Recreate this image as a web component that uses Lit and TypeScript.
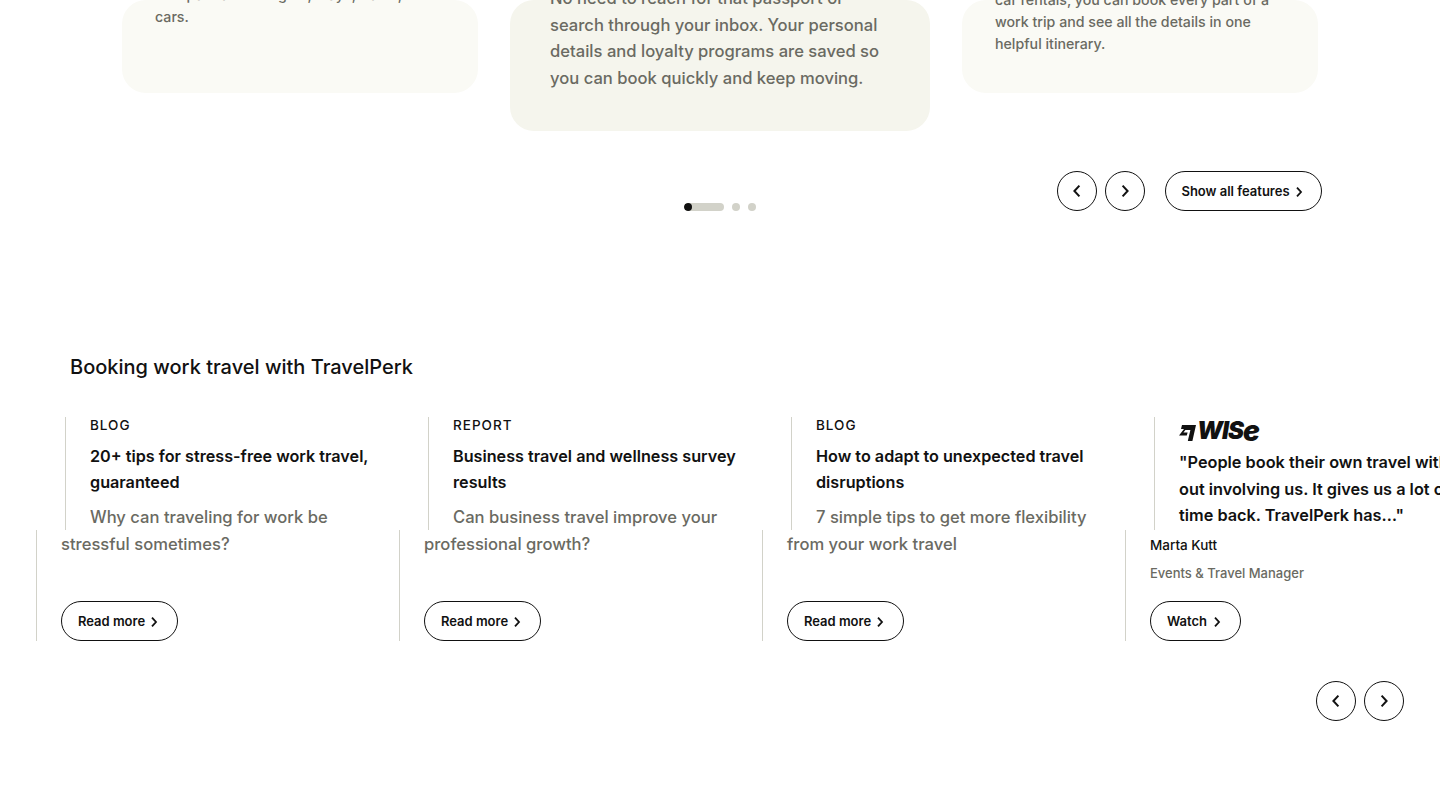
import { LitElement, html, css, svg } from "lit";
import { customElement } from "lit/decorators.js";

const chevR = html`<svg class="chev" width="8" height="12" viewBox="0 0 8 12"><path d="M2 1.6 6 6 2 10.4" fill="none" stroke="#111" stroke-width="1.8"/></svg>`;
const bigR = html`<svg width="10" height="14" viewBox="0 0 10 14"><path d="M2.6 1.6 7.6 7 2.6 12.4" fill="none" stroke="#111" stroke-width="2"/></svg>`;
const bigL = html`<svg width="10" height="14" viewBox="0 0 10 14"><path d="M7.4 1.6 2.4 7 7.4 12.4" fill="none" stroke="#111" stroke-width="2"/></svg>`;
const flag = svg`<path d="M3 1H17L13.4 17H8.8L11.4 6H6.4L4.4 8.6H8.6L7.8 11.6H0L5 5H2z" fill="#111"/>`;

const tops = [
  { tag: "BLOG", title: ["20+ tips for stress-free work travel,", "guaranteed"], desc: "Why can traveling for work be" },
  { tag: "REPORT", title: ["Business travel and wellness survey", "results"], desc: "Can business travel improve your" },
  { tag: "BLOG", title: ["How to adapt to unexpected travel", "disruptions"], desc: "7 simple tips to get more flexibility" },
];
const bottoms = [
  { desc: "stressful sometimes?", cta: "Read more" },
  { desc: "professional growth?", cta: "Read more" },
  { desc: "from your work travel", cta: "Read more" },
];

@customElement("app-root")
export class AppRoot extends LitElement {
  static styles = css`
    :host { display: block; width: 1440px; height: 810px; overflow: hidden; background: #fff; font-family: Inter, "Liberation Sans", sans-serif; color: #111; }
    .cards { display: flex; justify-content: center; gap: 32px; height: 131px; align-items: flex-start; }
    .card { display: flex; flex-direction: column; justify-content: flex-end; flex: none; box-sizing: border-box; border-radius: 24px; color: #6a6a62; font-weight: 500; white-space: nowrap; }
    .side { width: 356px; height: 93px; background: #fafaf5; padding: 0 33px; font-size: 14.2px; line-height: 22px; }
    .side.first { padding-bottom: 65px; }
    .side.last { padding-bottom: 38px; }
    .mid { width: 420px; height: 131px; background: #f5f5ed; padding: 0 40px 40px; font-size: 16.6px; line-height: 26.5px; }
    .controls { display: grid; grid-template-columns: 1fr auto 1fr; height: 40px; margin-top: 40px; padding: 0 118px; }
    .dots { display: flex; gap: 8px; align-self: end; }
    .dots i { display: block; width: 8px; height: 8px; border-radius: 4px; background: #d2d2c9; }
    .dots i.on { width: 40px; overflow: hidden; }
    .dots i.on b { display: block; width: 8px; height: 8px; border-radius: 4px; background: #111; }
    .btns { display: flex; gap: 8px; justify-content: flex-end; }
    .round, .pill { display: flex; align-items: center; justify-content: center; box-sizing: border-box; height: 40px; border: 1px solid #111; background: #fff; flex: none; font-weight: 600; color: #111; }
    .round { width: 40px; border-radius: 50%; }
    .pill { border-radius: 20px; font-size: 13px; gap: 5px; white-space: nowrap; padding-right: 3px; }
    .pill .chev { margin-top: 1px; }
    .pill.all { width: 157px; margin-left: 12px; }
    .pill.more { width: 117px; }
    .pill.watch { width: 91px; gap: 6px; }
    h2 { margin: 143px 0 0 70px; font-size: 20px; line-height: 26px; font-weight: 500; }
    .strip { display: flex; overflow: hidden; }
    .strip.upper { height: 113px; margin-top: 37px; padding-left: 65px; }
    .strip.lower { height: 111px; padding-left: 36px; }
    .col { flex: none; width: 363px; box-sizing: border-box; padding-left: 24px; border-left: 1px solid #d2d2c9; white-space: nowrap; }
    .lower .col { display: flex; flex-direction: column; align-items: flex-start; justify-content: space-between; height: 111px; padding-top: 1px; }
    .tag { font-size: 13.5px; line-height: 16px; letter-spacing: 1px; font-weight: 500; }
    .title { margin-top: 10px; font-size: 16.2px; line-height: 26px; font-weight: 600; }
    .desc { font-size: 16.6px; line-height: 26.5px; font-weight: 500; color: #6a6a62; }
    .upper .desc { margin-top: 9px; }
    .wise { display: flex; align-items: flex-end; height: 26px; font-weight: 900; font-style: italic; color: #111; font-size: 24px; line-height: 24px; letter-spacing: -1px; }
    .wise svg { margin-right: 1px; margin-bottom: 1px; }
    .wise span.e { font-size: 28px; }
    .quote { font-size: 16.3px; line-height: 26.5px; font-weight: 600; margin-top: 6px; }
    .who { font-size: 13.5px; line-height: 28px; font-weight: 500; }
    .role { color: #6a6a62; font-size: 13px; }
    .foot { display: flex; justify-content: flex-end; gap: 8px; margin-top: 40px; padding-right: 36px; }
  `;

  render() {
    return html`
      <div class="cards">
        <div class="card side first"><div>Compare all the flights, stays, trains,<br />cars.</div></div>
        <div class="card mid"><div>No need to reach for that passport or<br />search through your inbox. Your personal<br />details and loyalty programs are saved so<br />you can book quickly and keep moving.</div></div>
        <div class="card side last"><div>car rentals, you can book every part of a<br />work trip and see all the details in one<br />helpful itinerary.</div></div>
      </div>
      <div class="controls">
        <div></div>
        <div class="dots"><i class="on"><b></b></i><i></i><i></i></div>
        <div class="btns">
          <div class="round">${bigL}</div>
          <div class="round">${bigR}</div>
          <div class="pill all">Show all features ${chevR}</div>
        </div>
      </div>
      <h2>Booking work travel with TravelPerk</h2>
      <div class="strip upper">
        ${tops.map((t) => html`<div class="col">
          <div class="tag">${t.tag}</div>
          <div class="title">${t.title[0]}<br />${t.title[1]}</div>
          <div class="desc">${t.desc}</div>
        </div>`)}
        <div class="col">
          <div class="wise"><svg width="17" height="18" viewBox="0 0 17 18">${flag}</svg><span>WIS</span><span class="e">e</span></div>
          <div class="quote">"People book their own travel with<br />out involving us. It gives us a lot of<br />time back. TravelPerk has…"</div>
        </div>
      </div>
      <div class="strip lower">
        ${bottoms.map((b) => html`<div class="col">
          <div class="desc">${b.desc}</div>
          <div class="pill more">${b.cta} ${chevR}</div>
        </div>`)}
        <div class="col">
          <div>
            <div class="who">Marta Kutt</div>
            <div class="who role">Events &amp; Travel Manager</div>
          </div>
          <div class="pill watch">Watch ${chevR}</div>
        </div>
      </div>
      <div class="foot">
        <div class="round">${bigL}</div>
        <div class="round">${bigR}</div>
      </div>
    `;
  }
}
